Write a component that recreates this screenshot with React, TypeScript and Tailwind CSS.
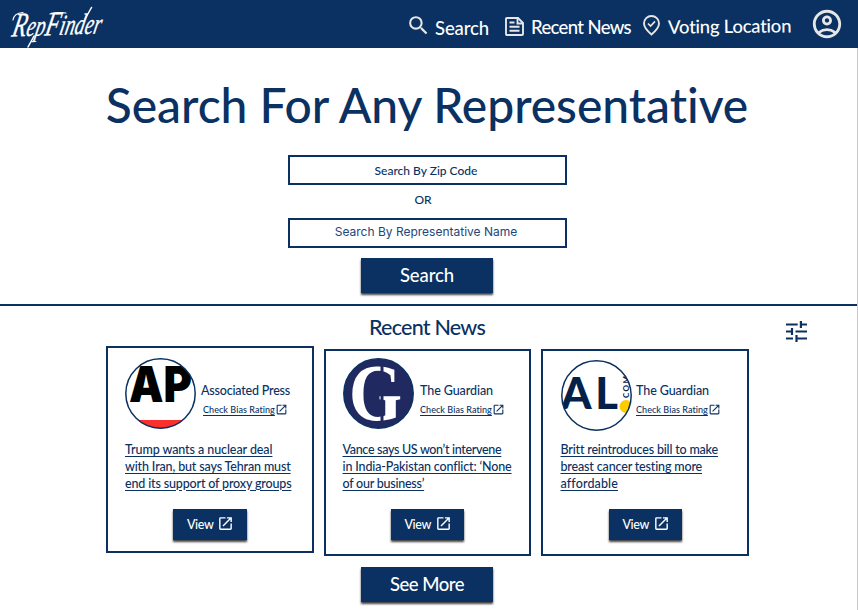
import type { ReactNode } from "react";
import { MdSearch, MdOutlineAccountCircle, MdOpenInNew } from "react-icons/md";

function Wordmark() {
  return (
    <svg className="block h-12 w-[110px] shrink-0" viewBox="0 0 110 48">
      <text x="0" y="0" transform="rotate(-2 12 36) translate(11 36.5) skewX(-14) scale(0.67 1)" fill="#fff" stroke="#fff" strokeWidth="0.300" fontFamily="Liberation Serif, serif" fontStyle="italic" fontSize="29" textLength="133" lengthAdjust="spacingAndGlyphs">
        <tspan fontSize="34">R</tspan>ep<tspan fontSize="34">F</tspan>inder
      </text>
      <path d="M34 36L28 47M85 19L91.500 7.500" stroke="#fff" strokeWidth="1.500" strokeLinecap="round" />
      <path d="M13 20Q14 13 23 12.500M50 14Q58 12 66 13" stroke="#fff" strokeWidth="1.200" fill="none" strokeLinecap="round" />
    </svg>
  );
}

function NewsIcon() {
  return (
    <svg className="h-[19px] w-[19px]" viewBox="0 0 19 19" fill="none" stroke="#e6e6e6" strokeWidth="1.900">
      <path d="M1 2Q1 1 2 1H13L18 6V17Q18 18 17 18H2Q1 18 1 17Z" />
      <path d="M12.500 1V6.500H18M4.500 5.500H9.500M4.500 9.700H14.500M4.500 13.700H14.500" />
    </svg>
  );
}

function VoteIcon() {
  return (
    <svg className="h-[21px] w-[17px]" viewBox="0 0 17 21" fill="none" stroke="#e6e6e6" strokeWidth="1.900">
      <path d="M8.500 19.500Q1 13.200 1 8.500A7.500 7.500 0 0 1 16 8.500Q16 13.200 8.500 19.500Z" />
      <path d="M5 8.500L7.600 11L12 6.400" strokeWidth="1.700" />
    </svg>
  );
}

function TuneIcon({ className }: { className: string }) {
  return (
    <svg className={className} viewBox="0 0 21 21" fill="none" stroke="currentColor" strokeWidth="2.200">
      <path d="M0 3.500H11.700M14 3.500H21M14.900 0V7M0 10.500H6.500M9.500 10.500H21M6 7V14M0 17.500H7M10.500 17.500H21M10.500 14V21" />
    </svg>
  );
}

function ApLogo() {
  return (
    <svg className="h-[71px] w-[71px] shrink-0" viewBox="0 0 71 71">
      <clipPath id="ap"><circle cx="35.500" cy="35.500" r="35" /></clipPath>
      <g clipPath="url(#ap)">
        <rect width="71" height="71" fill="#fff" />
        <rect y="62" width="71" height="9" fill="#fb302d" />
        <text x="4" y="44" fontFamily="Inter, sans-serif" fontWeight="900" fontSize="49" fill="#000" textLength="63" lengthAdjust="spacingAndGlyphs">AP</text>
      </g>
      <circle cx="35.500" cy="35.500" r="34.700" fill="none" stroke="#0a3161" strokeWidth="1.500" />
    </svg>
  );
}

function GuardianLogo() {
  return (
    <svg className="h-[71px] w-[71px] shrink-0" viewBox="0 0 71 71">
      <circle cx="35.500" cy="35.500" r="34.700" fill="#202a60" stroke="#0a3161" strokeWidth="1.500" />
      <text x="6" y="62" fontFamily="Liberation Serif, serif" fontWeight="700" fontSize="80" fill="#fff" textLength="53" lengthAdjust="spacingAndGlyphs">G</text>
      <path d="M39 6V65" stroke="#202a60" strokeWidth="3" />
    </svg>
  );
}

function AlLogo() {
  return (
    <svg className="mt-[2px] h-[71px] w-[71px] shrink-0" viewBox="0 0 71 71">
      <clipPath id="al"><circle cx="35.500" cy="35.500" r="35" /></clipPath>
      <g clipPath="url(#al)">
        <rect width="71" height="71" fill="#fff" />
        <circle cx="65" cy="46.500" r="6.500" fill="#fc0" />
        <g className="font-['Lato',sans-serif]" fill="#04214a">
          <text x="0" y="49" fontSize="43.500" fontWeight="900" textLength="57" lengthAdjust="spacing">AL</text>
          <text transform="translate(68 38) rotate(-90)" fontSize="8" fontWeight="700" textLength="22">COM</text>
        </g>
      </g>
      <circle cx="35.500" cy="35.500" r="34.700" fill="none" stroke="#0a3161" strokeWidth="1.500" />
    </svg>
  );
}

type Line = { text: string; track: string };
type Story = { logo: ReactNode; name: string; nameTrack: string; card: string; info: string; link: string; lines: Line[] };

const stories: Story[] = [
  {
    logo: <ApLogo />,
    name: "Associated Press",
    nameTrack: "tracking-[-0.2px]",
    card: "pt-[10px] pl-[17px]",
    info: "ml-[5px]",
    link: "ml-[2px]",
    lines: [
      { text: "Trump wants a nuclear deal", track: "tracking-[-0.08px]" },
      { text: "with Iran, but says Tehran must", track: "tracking-[-0.15px]" },
      { text: "end its support of proxy groups", track: "tracking-[-0.16px]" },
    ],
  },
  {
    logo: <GuardianLogo />,
    name: "The Guardian",
    nameTrack: "tracking-[-0.08px]",
    card: "mt-[3px] pt-[7px] pl-[17px]",
    info: "ml-[6.5px]",
    link: "",
    lines: [
      { text: "Vance says US won’t intervene", track: "tracking-[-0.32px]" },
      { text: "in India-Pakistan conflict: ‘None", track: "tracking-[-0.15px]" },
      { text: "of our business’", track: "tracking-[-0.24px]" },
    ],
  },
  {
    logo: <AlLogo />,
    name: "The Guardian",
    nameTrack: "tracking-[-0.08px]",
    card: "mt-[3px] pt-[7px] pl-[17.5px]",
    info: "ml-[4.5px]",
    link: "",
    lines: [
      { text: "Britt reintroduces bill to make", track: "tracking-[-0.18px]" },
      { text: "breast cancer testing more", track: "tracking-[-0.16px]" },
      { text: "affordable", track: "tracking-[0.13px]" },
    ],
  },
];

function StoryCard({ story }: { story: Story }) {
  return (
    <article className={`h-[207px] w-[207.5px] shrink-0 border-2 border-[#0a3161] ${story.card}`}>
      <div className="flex h-[73px] items-start">
        {story.logo}
        <div className={`pt-[25px] ${story.info}`}>
          <h3 className={`text-[12.5px] leading-4 font-medium whitespace-nowrap ${story.nameTrack}`}>{story.name}</h3>
          <a className={`mt-[3px] flex items-center text-[9px] leading-4 font-medium tracking-[0.06px] whitespace-nowrap ${story.link}`}>
            <span className="underline decoration-[1px] underline-offset-[2px]">Check Bias Rating</span>
            <MdOpenInNew className="-mt-px h-[13px] w-[13px]" />
          </a>
        </div>
      </div>
      <div className="mt-[11px] flex h-[51px] flex-col items-start text-[12.5px] leading-[16.8px] font-medium">
        {story.lines.map((line) => (
          <span key={line.text} className={`whitespace-nowrap underline decoration-[1px] underline-offset-[2px] ${line.track}`}>{line.text}</span>
        ))}
      </div>
      <button className="mt-[16px] ml-[48px] flex h-[31px] w-[73.5px] items-center bg-[#0a3161] pl-[14px] text-[12.5px] font-medium tracking-[-0.4px] text-white shadow-[0_2px_2px_rgba(0,0,0,0.75)]">
        <span className="pt-px">View</span>
        <MdOpenInNew className="-mt-[3px] ml-[4px] h-[17px] w-[17px]" />
      </button>
    </article>
  );
}

export default function App() {
  return (
    <div className="h-[610px] w-[858px] overflow-hidden bg-white font-['Lato',sans-serif] text-[#0a3161]">
      <header className="flex h-12 items-start bg-[#0a3161] text-[18.5px] font-medium text-white">
        <Wordmark />
        <nav className="flex flex-1 items-start leading-6 whitespace-nowrap">
          <a className="ml-[296px] flex w-[99px] items-start">
            <MdSearch className="mt-[13px] h-[25px] w-[25px] text-[#e6e6e6]" />
            <span className="mt-[16px] ml-[4px] tracking-[-0.1px]">Search</span>
          </a>
          <a className="flex w-[138px] items-start">
            <span className="mt-[17px]"><NewsIcon /></span>
            <span className="mt-[15px] ml-[7px] tracking-[-0.64px]">Recent News</span>
          </a>
          <a className="flex w-[167px] items-start">
            <span className="mt-[15px]"><VoteIcon /></span>
            <span className="mt-[14px] ml-[8px] -rotate-[0.6deg] tracking-[-0.25px]">Voting Location</span>
          </a>
          <MdOutlineAccountCircle className="mt-[7px] h-[34px] w-[34px] text-[#e6e6e6]" />
        </nav>
      </header>

      <main className="h-[562px] border-r border-[#c9c9c9]">
        <section className="flex h-[258px] flex-col items-center border-b-2 border-[#0a3161] pr-[3px]">
          <h1 className="mt-[28px] h-[58px] text-[48px] leading-[58px] font-medium tracking-[-0.05px] whitespace-nowrap">Search For Any Representative</h1>
          <div className="mt-[21px] h-[30px] w-[279px] border-2 border-[#0a3161] pr-[2px] text-center text-[12px] leading-[27px] font-medium">Search By Zip Code</div>
          <div className="mt-[6px] mr-[8px] h-[18px] text-[12px] leading-[18px] font-medium">OR</div>
          <div className="mt-[9px] h-[30px] w-[279px] border-2 border-[#0a3161] pr-[2px] text-center font-['Inter',sans-serif] text-[12px] leading-[23px] text-[#23457a]">Search By Representative Name</div>
          <button className="mt-[10px] h-[35px] w-[132px] bg-[#0a3161] text-[18.5px] font-medium tracking-[-0.1px] text-white shadow-[0_2px_2px_rgba(0,0,0,0.75)]">Search</button>
        </section>

        <section>
          <div className="flex h-10 items-start">
            <h2 className="mt-[8px] ml-[369px] w-[417px] text-[21.5px] leading-[26px] font-medium tracking-[-0.76px]">Recent News</h2>
            <TuneIcon className="mt-[15px] h-[21px] w-[21px]" />
          </div>
          <div className="ml-[106px] flex items-start gap-[10px]">
            {stories.map((story) => <StoryCard key={story.lines[0].text} story={story} />)}
          </div>
          <button className="mt-[11px] ml-[361px] block h-[35px] w-[132px] bg-[#0a3161] text-[18.5px] font-medium tracking-[-0.5px] text-white shadow-[0_2px_2px_rgba(0,0,0,0.75)]">See More</button>
        </section>
      </main>
    </div>
  );
}
